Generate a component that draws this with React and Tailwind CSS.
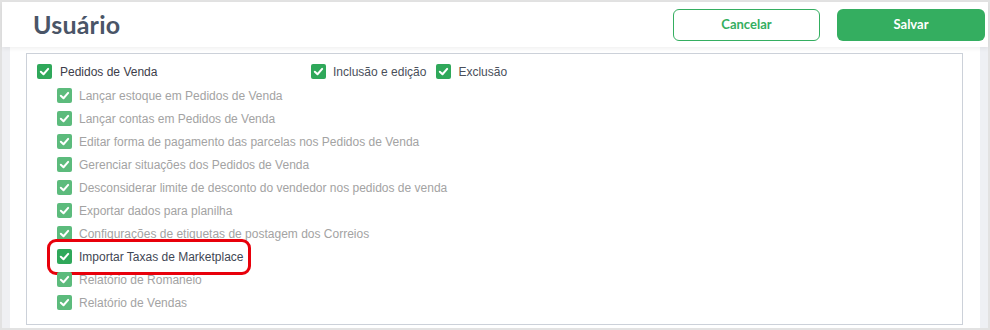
import { useState } from "react";

function Check({ muted }) {
  return (
    <span
      className={
        "flex h-[15px] w-[15px] shrink-0 items-center justify-center rounded-[2px] " +
        (muted ? "bg-[#5cbb7c]" : "bg-[#2fa85a]")
      }
    >
      <svg width="11" height="11" viewBox="0 0 12 12">
        <path d="M2 6.3 L4.9 9 L10 3.2" fill="none" stroke="white" strokeWidth="2.2" strokeLinecap="round" strokeLinejoin="round" />
      </svg>
    </span>
  );
}

const subItems = [
  { label: "Lançar estoque em Pedidos de Venda" },
  { label: "Lançar contas em Pedidos de Venda" },
  { label: "Editar forma de pagamento das parcelas nos Pedidos de Venda" },
  { label: "Gerenciar situações dos Pedidos de Venda" },
  { label: "Desconsiderar limite de desconto do vendedor nos pedidos de venda" },
  { label: "Exportar dados para planilha" },
  { label: "Configurações de etiquetas de postagem dos Correios" },
  { label: "Importar Taxas de Marketplace", active: true },
  { label: "Relatório de Romaneio" },
  { label: "Relatório de Vendas" },
];

export default function App() {
  const [items] = useState(subItems);

  return (
    <div className="flex h-[330px] w-[990px] flex-col border-2 border-[#e2e2e2] bg-white font-['Liberation_Sans',Arial,sans-serif]">
      <header className="relative z-10 flex h-[45px] shrink-0 items-center justify-between bg-white pl-[31px] pr-[3px] shadow-[0_2px_4px_rgba(0,0,0,0.06)]">
        <h1 className="font-['Lato',sans-serif] text-[25px] font-bold leading-none tracking-[0.2px] text-[#4a5567]">Usuário</h1>
        <div className="flex gap-[17px] pt-[1px]">
          <button className="h-[32px] w-[147px] rounded-[6px] border border-[#34ae60] bg-white font-['Lato',sans-serif] text-[13px] font-bold text-[#34ae60]">
            Cancelar
          </button>
          <button className="h-[32px] w-[148px] rounded-[6px] bg-[#34ae60] font-['Lato',sans-serif] text-[13px] font-bold text-white">
            Salvar
          </button>
        </div>
      </header>

      <div className="flex min-h-0 flex-1">
        <div className="w-[8px] bg-[#eff0f3]" />
        <div className="flex-1 bg-white pb-[3px] pl-[16px] pr-[17px] pt-[6px]">
          <div className="h-full border border-[#ccd1d9] pl-[10px] pt-[10px]">
            <div className="flex h-[15px] items-center text-[12px]">
              <label className="flex w-[274px] items-center gap-[8px] text-[#3d3d4a]">
                <Check />
                Pedidos de Venda
              </label>
              <label className="flex items-center gap-[7px] text-[#4a4f5a]">
                <Check />
                Inclusão e edição
              </label>
              <label className="ml-[10px] flex items-center gap-[7px] text-[#4a4f5a]">
                <Check />
                Exclusão
              </label>
            </div>

            <ul className="mt-[5px] pl-[20px]">
              {items.map((item) => (
                <li key={item.label} className="relative flex h-[23px] items-center gap-[7px] text-[12px]">
                  {item.active && (
                    <span className="absolute left-[-10px] top-1/2 h-[36px] w-[204px] -translate-y-1/2 rounded-[9px] border-[3px] border-[#e8000b]" />
                  )}
                  <Check muted={!item.active} />
                  <span className={item.active ? "text-[#3f4754]" : "text-[#a3a3a3]"}>{item.label}</span>
                </li>
              ))}
            </ul>
          </div>
        </div>
        <div className="w-[8px] bg-[#eef0f4]" />
      </div>
    </div>
  );
}
